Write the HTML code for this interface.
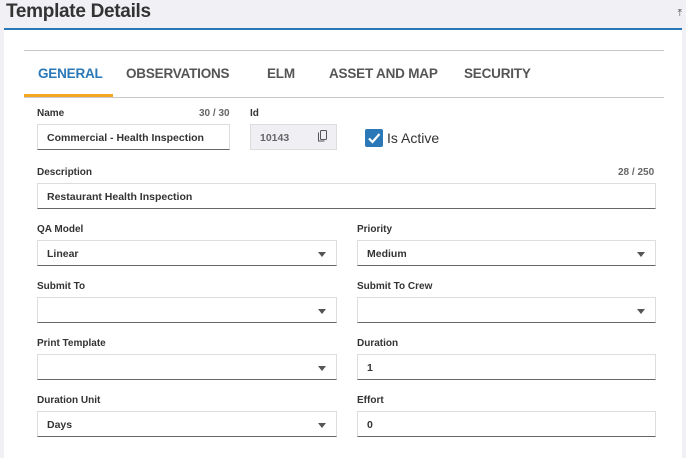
<!DOCTYPE html>
<html><head><style>
*{box-sizing:border-box;margin:0;padding:0}
body{width:686px;height:450px;overflow:hidden;background:#f1f1f5;font-family:"Liberation Sans",sans-serif;position:relative;color:#333}
.a{position:absolute}
.title{left:6px;top:1px;font-size:19px;font-weight:bold;color:#333;letter-spacing:-0.3px}
.panel{left:4px;top:28px;width:678px;height:430px;background:#fff;border-top:2px solid #2a78b8}
.line{height:1px;background:#c8c8c8;left:24px;width:640px}
.tab{top:66px;font-size:13.5px;font-weight:bold;color:#555;letter-spacing:-0.2px}
.lbl{font-size:10px;font-weight:bold;color:#333}
.cnt{font-size:10px;font-weight:bold;color:#666}
.in{height:26px;border:1px solid #ddd;border-bottom:1px solid #666;background:#fff;font-size:10.5px;font-weight:bold;color:#333;padding:7px 9px;white-space:nowrap}
.dd::after{content:"";position:absolute;right:10px;top:11px;border-left:4.5px solid transparent;border-right:4.5px solid transparent;border-top:5px solid #555}
</style></head><body>
<div class="a title">Template Details</div>
<div class="a" style="right:4px;top:8px;font-size:10px;color:#555">⤒</div>
<div class="a panel"></div>
<div class="a line" style="top:50px"></div>
<div class="a line" style="top:97px"></div>
<div class="a" style="left:24px;top:94px;width:89px;height:3px;background:#f5a623"></div>
<div class="a tab" style="left:38px;color:#2a78b8">GENERAL</div>
<div class="a tab" style="left:126px">OBSERVATIONS</div>
<div class="a tab" style="left:267px">ELM</div>
<div class="a tab" style="left:329px">ASSET AND MAP</div>
<div class="a tab" style="left:464px">SECURITY</div>

<div class="a lbl" style="left:37px;top:108px">Name</div>
<div class="a cnt" style="left:199px;top:108px">30 / 30</div>
<div class="a lbl" style="left:250px;top:108px">Id</div>
<div class="a in" style="left:37px;top:124px;width:193px">Commercial - Health Inspection</div>
<div class="a in" style="left:250px;top:124px;width:87px;background:#f0f0f4;border-bottom-color:#ddd;color:#666;font-weight:bold">10143</div>
<svg class="a" style="left:318px;top:130px" width="9" height="12" viewBox="0 0 9 12"><rect x="2.5" y="0.5" width="6" height="9" rx="1" fill="none" stroke="#555"/><path d="M0.5 2.5v8.5h6" fill="none" stroke="#555"/></svg>
<div class="a" style="left:365px;top:129px;width:18px;height:18px;background:#2a78b8;border-radius:2px"></div>
<svg class="a" style="left:365px;top:129px" width="18" height="18"><path d="M4 9.5l3.5 3.5 7-8" fill="none" stroke="#fff" stroke-width="2.2"/></svg>
<div class="a" style="left:387px;top:130px;font-size:14px;color:#333">Is Active</div>

<div class="a lbl" style="left:37px;top:167px">Description</div>
<div class="a cnt" style="left:618px;top:167px">28 / 250</div>
<div class="a in" style="left:37px;top:183px;width:619px">Restaurant Health Inspection</div>

<div class="a lbl" style="left:37px;top:224px">QA Model</div>
<div class="a lbl" style="left:357px;top:224px">Priority</div>
<div class="a in dd" style="left:37px;top:240px;width:300px">Linear</div>
<div class="a in dd" style="left:357px;top:240px;width:299px">Medium</div>

<div class="a lbl" style="left:37px;top:281px">Submit To</div>
<div class="a lbl" style="left:357px;top:281px">Submit To Crew</div>
<div class="a in dd" style="left:37px;top:297px;width:300px"></div>
<div class="a in dd" style="left:357px;top:297px;width:299px"></div>

<div class="a lbl" style="left:37px;top:338px">Print Template</div>
<div class="a lbl" style="left:357px;top:338px">Duration</div>
<div class="a in dd" style="left:37px;top:354px;width:300px"></div>
<div class="a in" style="left:357px;top:354px;width:299px">1</div>

<div class="a lbl" style="left:37px;top:395px">Duration Unit</div>
<div class="a lbl" style="left:357px;top:395px">Effort</div>
<div class="a in dd" style="left:37px;top:411px;width:300px">Days</div>
<div class="a in" style="left:357px;top:411px;width:299px">0</div>
</body></html>
